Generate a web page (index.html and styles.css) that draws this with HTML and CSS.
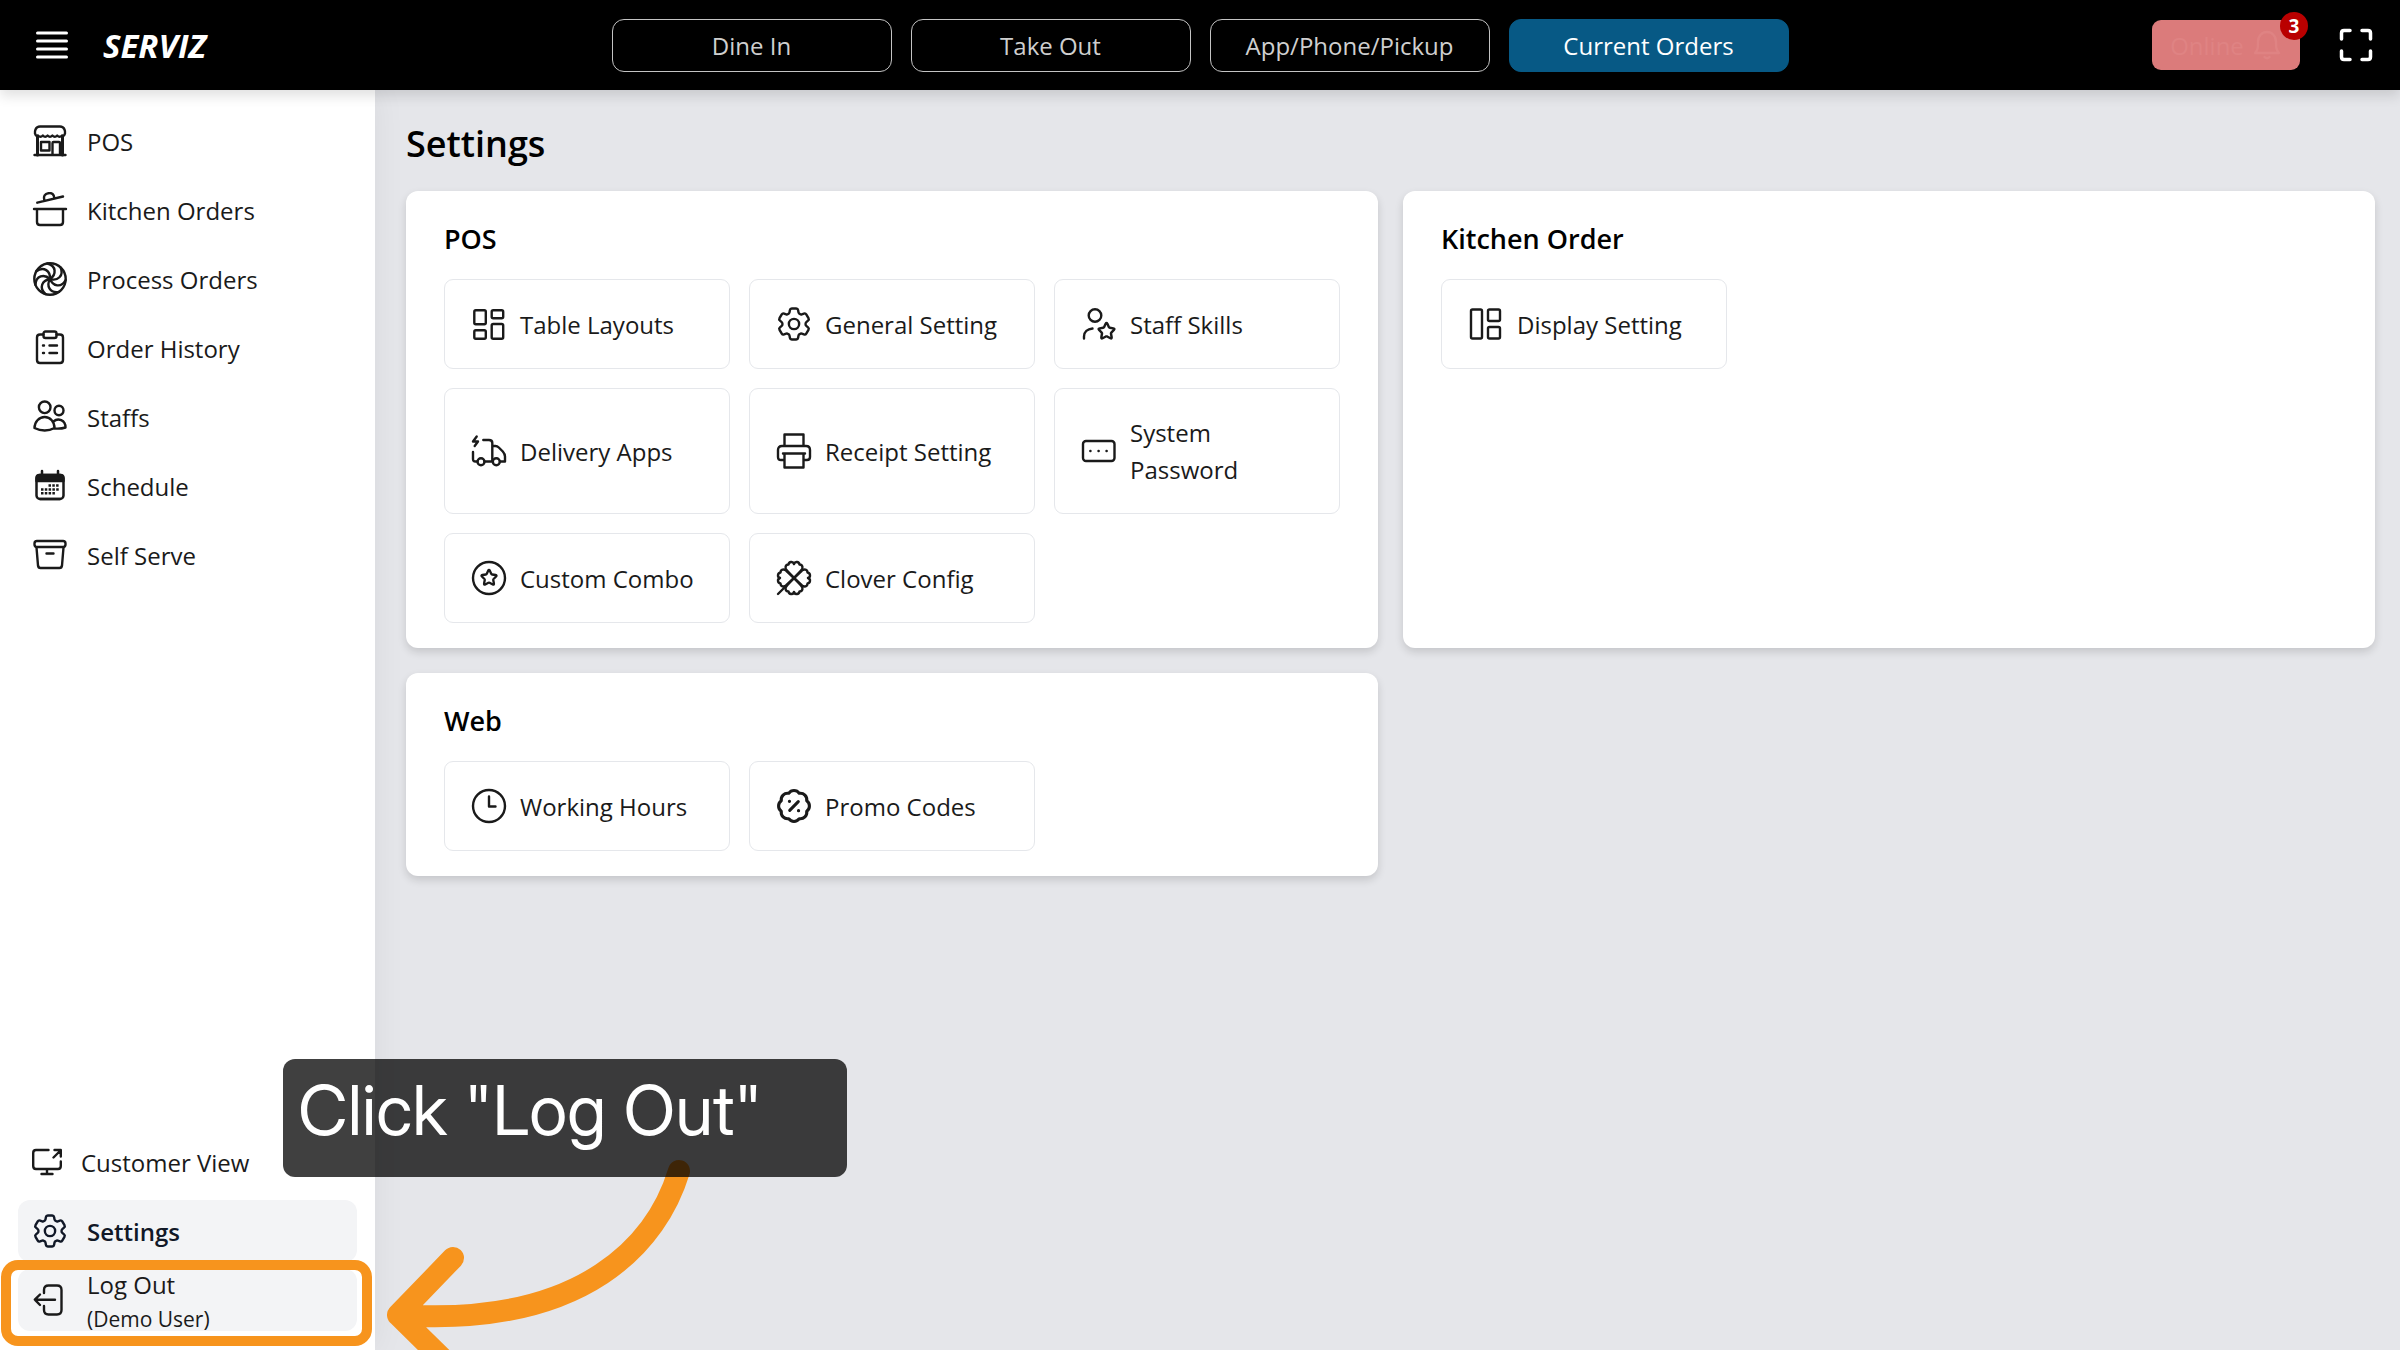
FILE: index.html
```html
<!DOCTYPE html>
<html lang="en">
<head>
<meta charset="utf-8">
<title>Serviz - Settings</title>
<link rel="stylesheet" href="styles.css">
</head>
<body>
<svg class="sprite" aria-hidden="true">
  <symbol id="gear" viewBox="1.5 1.5 21 21"><path stroke-width="1.4" d="M9.594 3.94c.09-.542.56-.94 1.11-.94h2.593c.55 0 1.02.398 1.11.94l.213 1.281c.063.374.313.686.645.87.074.04.147.083.22.127.325.196.72.257 1.075.124l1.217-.456a1.125 1.125 0 0 1 1.37.49l1.296 2.247a1.125 1.125 0 0 1-.26 1.431l-1.003.827c-.293.241-.438.613-.43.992a7.723 7.723 0 0 1 0 .255c-.008.378.137.75.43.991l1.004.827c.424.35.534.955.26 1.43l-1.298 2.247a1.125 1.125 0 0 1-1.369.491l-1.217-.456c-.355-.133-.75-.072-1.076.124a6.47 6.47 0 0 1-.22.128c-.331.183-.581.495-.644.869l-.213 1.281c-.09.543-.56.94-1.11.94h-2.594c-.55 0-1.019-.398-1.11-.94l-.213-1.281c-.062-.374-.312-.686-.644-.87a6.52 6.52 0 0 1-.22-.127c-.325-.196-.72-.257-1.076-.124l-1.217.456a1.125 1.125 0 0 1-1.369-.49l-1.297-2.247a1.125 1.125 0 0 1 .26-1.431l1.004-.827c.292-.24.437-.613.43-.991a6.932 6.932 0 0 1 0-.255c.007-.38-.138-.751-.43-.992l-1.004-.827a1.125 1.125 0 0 1-.26-1.43l1.297-2.247a1.125 1.125 0 0 1 1.37-.491l1.216.456c.356.133.751.072 1.076-.124.072-.044.146-.086.22-.128.332-.183.582-.495.644-.869l.214-1.28Z"/><circle cx="12" cy="12" r="3" stroke-width="1.4"/></symbol>
  <symbol id="star" viewBox="0 0 24 24"><path stroke-width="2.800" d="M11 3.2q1-1.8 2 0l1.8 3.9q.3.6 1 .7l4.100.6q1.900.4.6 1.800l-3 3q-.5.5-.4 1.200l.8 4.200q.3 1.900-1.400 1.100l-3.800-2q-.7-.3-1.400 0l-3.800 2q-1.700.8-1.400-1.100l.8-4.200q.1-.7-.4-1.200l-3-3q-1.300-1.400.6-1.800l4.100-.6q.7-.1 1-.7Z"/></symbol>
  <symbol id="leaf" viewBox="0 0 36 36"><path d="M18 18 11 10.500C8.300 8 9.500 4.500 12.500 4.500 13 1.500 17 1 18 4 19 1 23 1.500 23.500 4.500 26.500 4.500 27.700 8 25 10.500Z"/></symbol>
  <symbol id="swirl" viewBox="0 0 36 36"><path d="M18 18C24.500 13.500 24.500 5 15.500 2.500"/></symbol>
</svg>

<header class="topbar">
  <div class="brand">
    <button class="icon-button" type="button" aria-label="Menu">
      <svg class="icon" viewBox="0 0 36 36"><path stroke-width="3" d="M3.500 6h29M3.500 14h29M3.500 22h29M3.500 30h29"/></svg>
    </button>
    <span class="logo">SERVIZ</span>
  </div>
  <nav class="tabs">
    <button class="tab" type="button">Dine In</button>
    <button class="tab" type="button">Take Out</button>
    <button class="tab" type="button">App/Phone/Pickup</button>
    <button class="tab tab-current" type="button">Current Orders</button>
  </nav>
  <div class="status">
    <button class="online" type="button">
      Online
      <svg class="bell" viewBox="0 0 30 32"><path d="M3 24C6 21 6 18 6 13 6 7 10 3 15 3s9 4 9 10c0 5 0 8 3 11ZM12.500 28q2.500 2.500 5 0"/></svg>
      <span class="badge">3</span>
    </button>
    <button class="icon-button" type="button" aria-label="Full screen">
      <svg class="icon" viewBox="0 0 36 36"><path stroke-width="3.500" d="M3.500 12V6q0-2.500 2.500-2.500h6M24 3.500h6q2.500 0 2.500 2.500v6M32.500 24v6q0 2.500-2.500 2.500h-6M12 32.500H6q-2.500 0-2.500-2.500v-6"/></svg>
    </button>
  </div>
</header>

<div class="shell">
  <aside class="sidebar">
    <ul class="menu">
      <li><a class="item" href="#"><svg class="icon" viewBox="0 0 36 36"><path d="M5.500 13.500C2.500 12.500 2.500 9 3.500 6.500Q4.800 3.500 8 3.500h20q3.200 0 4.500 3c1 2.500 1 6-2 7M6 12.500q2.500 2.500 4.800 0 2.400 2.500 4.800 0 2.400 2.500 4.800 0 2.400 2.500 4.800 0 2.300 2.500 4.800 0M2.500 32h31M9 19h8.500v8.500H9ZM20.500 32V20q0-1 1-1H27q1 0 1 1v12"/><path stroke-width="3" d="M5.500 13v19M30.500 13v19"/></svg>POS</a></li>
      <li><a class="item" href="#"><svg class="icon" viewBox="0 0 36 36"><path d="M2 17h32M5 17v13q0 3 3 3h20q3 0 3-3V17M5.300 10.700 31 4.500M12.500 8.500C11 4 13 2 16.500 1.200 20 .5 22 2.500 22.300 6"/></svg>Kitchen Orders</a></li>
      <li><a class="item" href="#"><svg class="icon" viewBox="0 0 36 36"><circle cx="18" cy="18" r="15.700"/><use href="#swirl"/><use href="#swirl" transform="rotate(51.400 18 18)"/><use href="#swirl" transform="rotate(102.900 18 18)"/><use href="#swirl" transform="rotate(154.300 18 18)"/><use href="#swirl" transform="rotate(205.700 18 18)"/><use href="#swirl" transform="rotate(257.100 18 18)"/><use href="#swirl" transform="rotate(308.600 18 18)"/></svg>Process Orders</a></li>
      <li><a class="item" href="#"><svg class="icon" viewBox="0 0 36 36"><path d="M11.500 4.500H8q-3 0-3 3V30q0 3 3 3h20q3 0 3-3V7.500q0-3-3-3h-3.500M11 15.500h1M17.500 15.500h7.500M11 23h1M17.500 23h7.500"/><rect x="11.500" y="1.500" width="13" height="6.500" rx="2"/></svg>Order History</a></li>
      <li><a class="item" href="#"><svg class="icon" viewBox="0 0 36 36"><circle cx="12.700" cy="8.300" r="5.800"/><ellipse cx="27" cy="11.500" rx="4.500" ry="4.800"/><path d="M2.500 29C2.500 23 7 18 12.700 18S22.500 23 22.500 29Q18 31.500 12.700 31.500T2.500 29ZM21.500 22.500C26 18.500 33.500 21 33.500 28.500Q29 30 22.500 29.500"/></svg>Staffs</a></li>
      <li><a class="item" href="#"><svg class="icon" viewBox="0 0 36 36"><rect x="4.500" y="7" width="27" height="24" rx="3.500" stroke-width="2.500"/><path fill="currentColor" d="M4.500 13V10q0-3 3-3h21q3 0 3 3v3Z"/><path stroke-width="2.500" d="M10 3v4M26 3v4M8 31h20"/><path class="dots" d="M16.500 17.500h11M9 21.500h18.500M9 25.200h15"/></svg>Schedule</a></li>
      <li><a class="item" href="#"><svg class="icon" viewBox="0 0 36 36"><rect x="2.500" y="4" width="31" height="6" rx="2.500"/><path d="m4.500 10.500 1.500 18q.3 2.500 2.500 2.500h19q2.200 0 2.500-2.500l1.500-18M14.500 16.500h7"/></svg>Self Serve</a></li>
    </ul>
    <ul class="menu">
      <li><a class="item" href="#"><svg class="icon icon-small" viewBox="0 0 30 30"><path d="M16.500 3H4Q1.200 3 1.200 6v13q0 3 2.800 3h22q2.800 0 2.800-3v-4.500M15 22v5M9.500 27h11M21.500 10.500l7-7M22.500 3h6.300v6.500"/></svg>Customer View</a></li>
      <li><a class="item item-active" href="#"><svg class="icon"><use href="#gear"/></svg>Settings</a></li>
      <li class="guided">
        <a class="item item-hover" href="#"><svg class="icon" viewBox="0 0 36 36"><path d="M12 11V8q0-4.500 4.500-4.500H25q4.500 0 4.500 4.500v20q0 4.500-4.500 4.500h-8.500Q12 32.500 12 28v-4M23 17.700H3M8 12.500l-5.200 5.200L8 23"/></svg><span>Log Out<small class="user">(Demo User)</small></span></a>
        <span class="ring"></span>
        <svg class="arrow" viewBox="0 0 320 191"><path d="M294 12C273 81 203 169 13 156M68 99 13 156l57 56"/></svg>
        <div class="callout">Click "Log Out"</div>
      </li>
    </ul>
  </aside>

  <main class="content">
    <h1 class="title">Settings</h1>
    <div class="cards">
      <section class="card">
        <h2 class="heading">POS</h2>
        <div class="tiles">
          <button class="tile" type="button"><svg class="icon" viewBox="0 0 36 36"><rect x="3.300" y="4.300" width="11.500" height="14" rx="1.500"/><rect x="20.700" y="4.300" width="11.500" height="8" rx="1.500"/><rect x="3.300" y="24.300" width="11.500" height="8.500" rx="1.500"/><rect x="20.700" y="18" width="11.500" height="14.800" rx="1.500"/></svg>Table Layouts</button>
          <button class="tile" type="button"><svg class="icon"><use href="#gear"/></svg>General Setting</button>
          <button class="tile" type="button"><svg class="icon" viewBox="0 0 36 36"><circle cx="14" cy="9.500" r="6.300"/><path d="M3 32.500v-2C3 26 6.500 23 11.500 22.500"/><use href="#star" x="15" y="15" width="21" height="21"/></svg>Staff Skills</button>
          <button class="tile" type="button"><svg class="icon" viewBox="0 0 36 36"><path d="M12.300 7H18q3.300 0 3.300 3v18M21.300 13h3q2 0 3.500 1.500l4 4Q34 21 34 23.500V28.500h-5M21.800 28.500H13.500M6.500 28.500H4.500Q2 28.500 2 26V19M5.700 3.500 2 8.500h5L3.700 13"/><circle cx="10" cy="28.800" r="3.500"/><circle cx="25.300" cy="28.800" r="3.500"/></svg>Delivery Apps</button>
          <button class="tile" type="button"><svg class="icon" viewBox="0 0 36 36"><path d="M8.500 13V1.500h19V13M8.500 27H5Q2 27 2 24V17q0-4 4-4h24q4 0 4 4v7q0 3-3 3h-3.500M7 20.500h22M8.500 20.500v14h19v-14"/></svg>Receipt Setting</button>
          <button class="tile" type="button"><svg class="icon" viewBox="0 0 36 36"><rect x="2" y="8" width="31.500" height="20" rx="3"/><path d="M9.300 18h.2M17.500 18h.2M25.500 18h.2"/></svg>System Password</button>
          <button class="tile" type="button"><svg class="icon" viewBox="0 0 36 36"><circle cx="18" cy="18" r="16"/><use href="#star" x="8" y="8" width="20" height="20"/></svg>Custom Combo</button>
          <button class="tile" type="button"><svg class="icon" viewBox="0 0 36 36"><use href="#leaf"/><use href="#leaf" transform="rotate(90 18 18)"/><use href="#leaf" transform="rotate(180 18 18)"/><use href="#leaf" transform="rotate(270 18 18)"/><path d="M10 26l-8 8"/></svg>Clover Config</button>
        </div>
      </section>
      <section class="card">
        <h2 class="heading">Kitchen Order</h2>
        <div class="tiles">
          <button class="tile" type="button"><svg class="icon" viewBox="0 0 36 36"><rect x="3" y="3.500" width="11" height="29" rx="1.500"/><rect x="20" y="3.500" width="12" height="11.500" rx="1.500"/><rect x="20" y="21" width="12" height="11.500" rx="1.500"/></svg>Display Setting</button>
        </div>
      </section>
      <section class="card">
        <h2 class="heading">Web</h2>
        <div class="tiles">
          <button class="tile" type="button"><svg class="icon" viewBox="0 0 36 36"><circle cx="18" cy="18" r="16"/><path d="M18 8.500v10h6.500"/></svg>Working Hours</button>
          <button class="tile" type="button"><svg class="icon" viewBox="1.500 1.500 21 21"><path stroke-width="1.800" d="M21 12c0 1.268-.63 2.390-1.593 3.068a3.745 3.745 0 0 1-1.043 3.296 3.745 3.745 0 0 1-3.296 1.043A3.745 3.745 0 0 1 12 21c-1.268 0-2.390-.63-3.068-1.593a3.746 3.746 0 0 1-3.296-1.043 3.745 3.745 0 0 1-1.043-3.296A3.745 3.745 0 0 1 3 12c0-1.268.63-2.390 1.593-3.068a3.745 3.745 0 0 1 1.043-3.296 3.746 3.746 0 0 1 3.296-1.043A3.746 3.746 0 0 1 12 3c1.268 0 2.390.63 3.068 1.593a3.746 3.746 0 0 1 3.296 1.043 3.746 3.746 0 0 1 1.043 3.296A3.745 3.745 0 0 1 21 12ZM9.500 14.500l5-5M9.300 9.300h.1M14.600 14.700h.1"/></svg>Promo Codes</button>
        </div>
      </section>
    </div>
  </main>
</div>
</body>
</html>
```
FILE: styles.css
```css
* { box-sizing: border-box; }

body {
  margin: 0;
  min-height: 100vh;
  display: flex;
  flex-direction: column;
  background: #e5e6ea;
  color: #1a1a1a;
  font: 24px/37px "Open Sans", "Noto Sans", sans-serif;
}

button {
  margin: 0;
  padding: 0;
  border: 0;
  background: none;
  color: inherit;
  font: inherit;
}

.sprite {
  position: absolute;
  width: 0;
  height: 0;
}

.icon {
  flex: none;
  width: 36px;
  height: 36px;
}

.icon-small {
  width: 30px;
  height: 30px;
}

.icon,
.bell {
  fill: none;
  stroke: currentColor;
  stroke-width: 2.4;
  stroke-linecap: round;
  stroke-linejoin: round;
}

.dots {
  stroke-width: 2.5;
  stroke-linecap: butt;
  stroke-dasharray: 2.5 1.3;
}

/* Top bar */

.topbar {
  position: relative;
  z-index: 3;
  display: grid;
  grid-template-columns: 1fr auto 1fr;
  align-items: center;
  height: 90px;
  padding: 0 26px;
  background: #000;
  color: #fff;
  box-shadow: 0 6px 12px rgba(0, 0, 0, 0.12);
}

.brand {
  display: flex;
  align-items: center;
  gap: 33px;
  padding-left: 8px;
}

.icon-button { display: flex; }

.logo {
  font-size: 33px;
  font-style: italic;
  font-weight: 700;
}

.tabs {
  display: flex;
  gap: 19px;
}

.tab {
  width: 280px;
  height: 53px;
  border: 1px solid #c4c4c4;
  border-radius: 12px;
  color: #cfcfcf;
}

.tab-current {
  border-color: #075985;
  background: #075985;
  color: #fff;
}

.status {
  display: flex;
  align-items: center;
  justify-content: flex-end;
  gap: 38px;
}

.online {
  position: relative;
  display: flex;
  align-items: center;
  justify-content: center;
  gap: 8px;
  width: 148px;
  height: 50px;
  border-radius: 9px;
  background: #db7b7b;
  color: #df8383;
}

.bell {
  width: 30px;
  height: 32px;
}

.badge {
  position: absolute;
  top: -8px;
  right: -8px;
  width: 28px;
  height: 28px;
  border-radius: 50%;
  background: #b90000;
  color: #fff;
  font-size: 19px;
  font-weight: 700;
  line-height: 28px;
  text-align: center;
}

/* Sidebar */

.shell {
  display: flex;
  flex: 1;
}

.sidebar {
  position: relative;
  z-index: 2;
  flex: none;
  display: flex;
  flex-direction: column;
  justify-content: space-between;
  width: 375px;
  padding: 20px 18px 19px;
  background: #fff;
  box-shadow: 0 0 32px rgba(0, 0, 0, 0.06);
}

.menu {
  display: flex;
  flex-direction: column;
  gap: 7px;
  margin: 0;
  padding: 0;
  list-style: none;
}

.item {
  display: flex;
  align-items: center;
  gap: 19px;
  height: 62px;
  padding: 0 14px;
  border-radius: 12px;
  color: inherit;
  text-decoration: none;
}

.item-active {
  background: #f3f4f6;
  color: #111827;
  font-weight: 600;
}

.item-hover { background: #f3f4f6; }

.user {
  display: block;
  font-size: 21px;
  line-height: 32px;
}

/* Walkthrough overlay */

.guided { position: relative; }

.ring {
  position: absolute;
  inset: -9px -15px -15px -17px;
  border: 10px solid #f7941d;
  border-radius: 17px;
}

.arrow {
  position: absolute;
  left: 367px;
  bottom: -19px;
  width: 320px;
  height: 191px;
  fill: none;
  stroke: #f7941d;
  stroke-width: 22;
  stroke-linecap: round;
  stroke-linejoin: round;
}

.callout {
  position: absolute;
  left: 265px;
  bottom: 154px;
  width: 564px;
  height: 118px;
  padding: 0 15px;
  border-radius: 12px;
  background: rgba(0, 0, 0, 0.75);
  color: #fff;
  font: 69px/102px "Inter Display", Inter, sans-serif;
  font-variation-settings: "opsz" 32;
  white-space: nowrap;
}

/* Settings */

.content {
  flex: 1;
  padding: 29px 25px 25px 31px;
}

.title {
  margin: 0 0 22px;
  color: #000;
  font-size: 36px;
  font-weight: 600;
  line-height: 50px;
}

.cards {
  display: grid;
  grid-template-columns: 1fr 1fr;
  gap: 25px;
}

.card {
  padding: 28px 38px 25px;
  border-radius: 12px;
  background: #fff;
  box-shadow: 0 4px 8px rgba(0, 0, 0, 0.14);
}

.heading {
  margin: 0 0 20px;
  color: #000;
  font-size: 27px;
  font-weight: 600;
  line-height: 40px;
}

.tiles {
  display: grid;
  grid-template-columns: repeat(3, 1fr);
  gap: 19px;
}

.tile {
  display: flex;
  align-items: center;
  gap: 13px;
  min-height: 90px;
  padding: 25px 26px;
  border: 1px solid #e5e7eb;
  border-radius: 9px;
  text-align: left;
}
```
